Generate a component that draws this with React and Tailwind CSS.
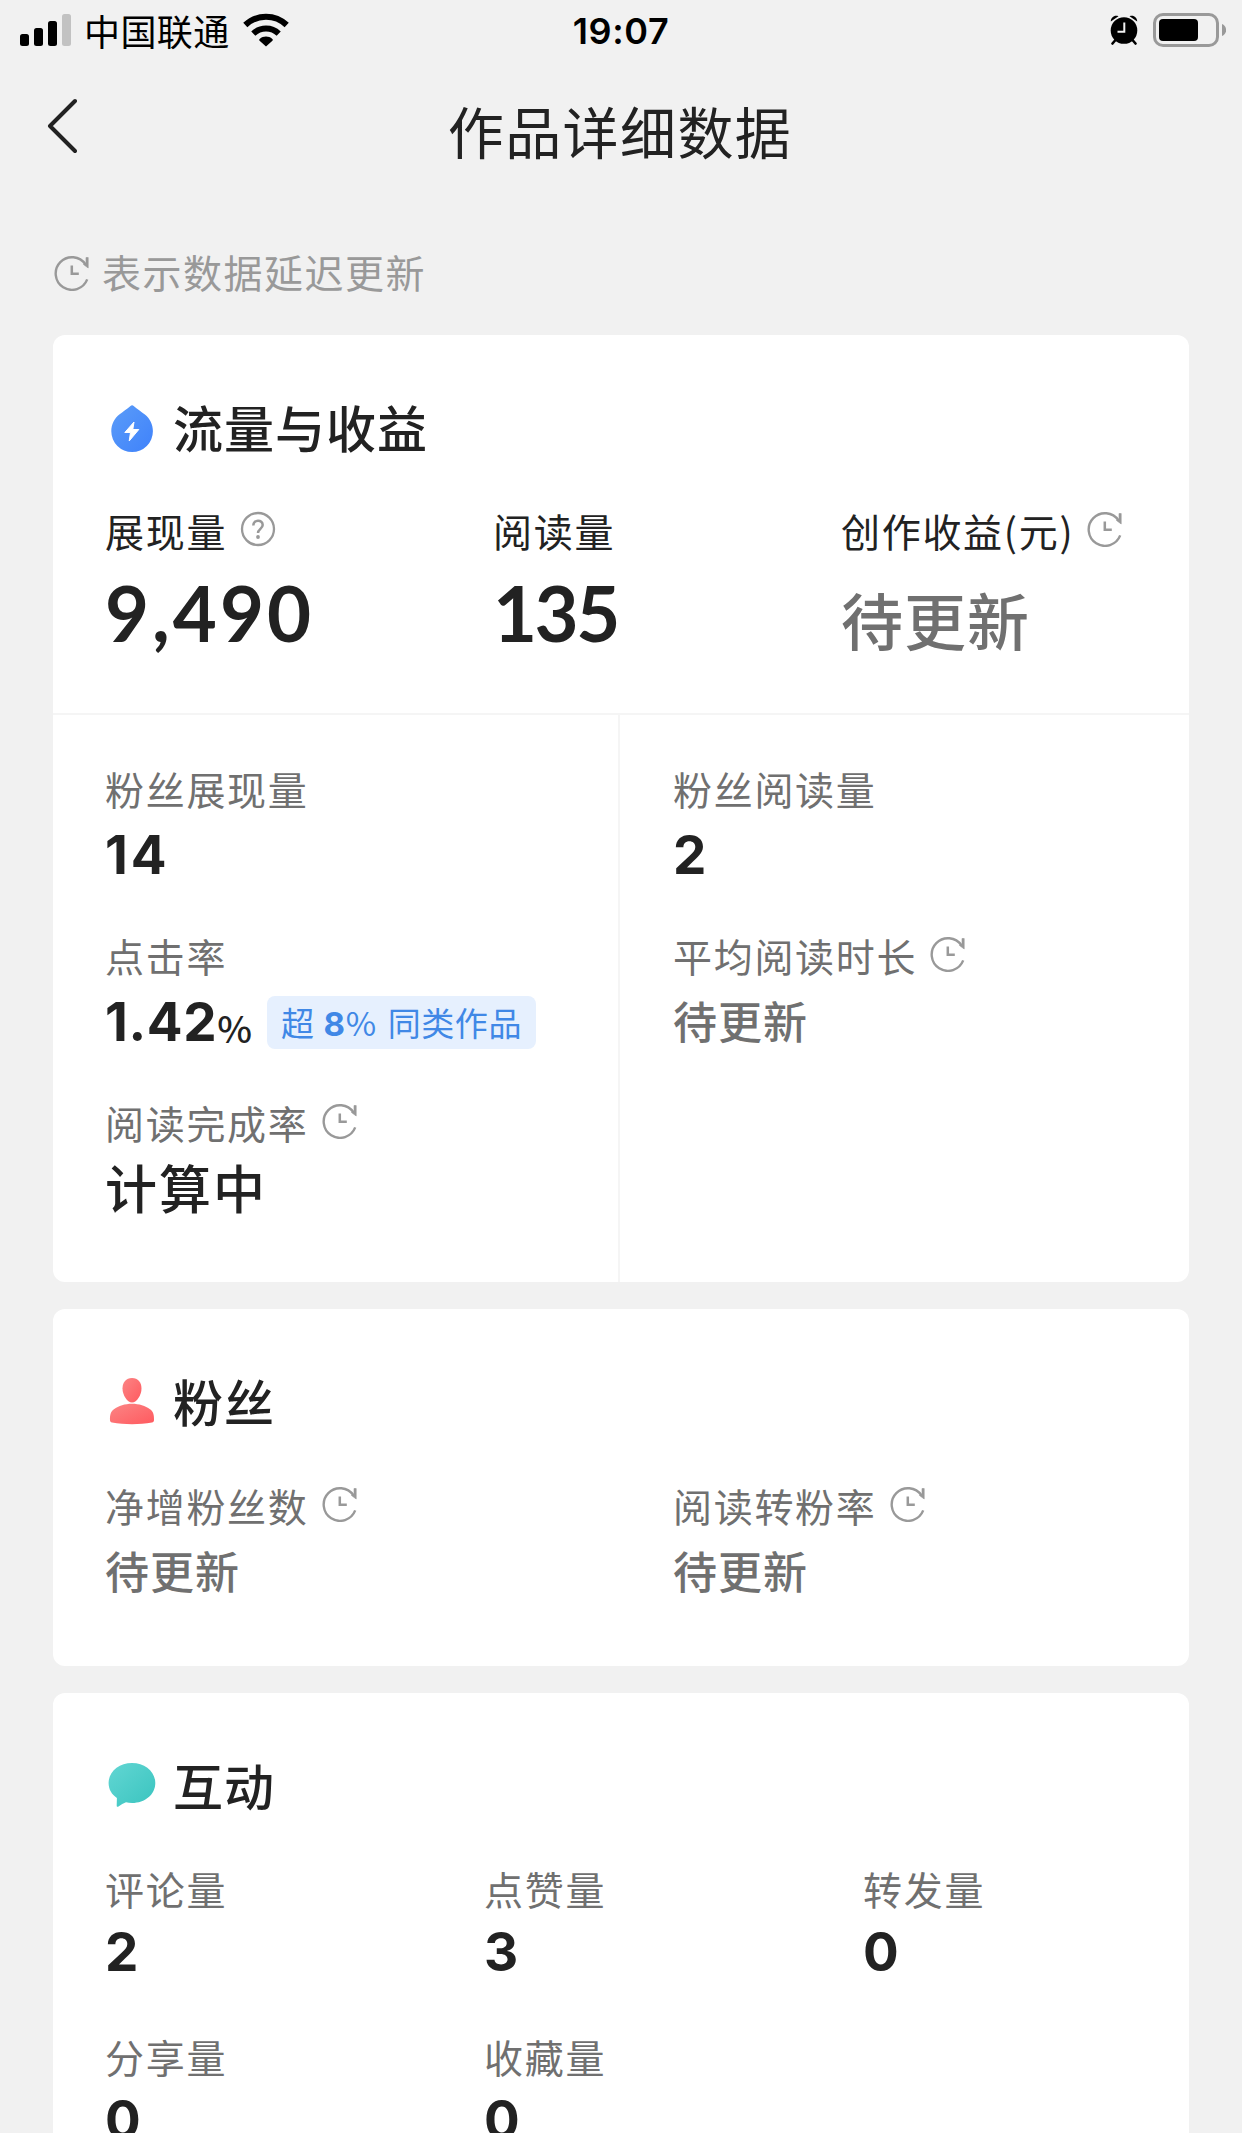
function ClockIcon() {
    return (
        <svg className="h-9 w-9 shrink-0" viewBox="0 0 36 36" fill="none" stroke="#999999" strokeWidth="2.4">
            <path d="M33.2 24.4A16.3 16.3 0 1 1 31.5 9.4" />
            <path d="M34.2 2.5v10.5l-4.800-3.600 2.600-1.600V2.5z" fill="#999999" strokeWidth="0.6" />
            <path d="M17.8 10.5v8.3h7" strokeWidth="2.5" />
        </svg>
    )
}

function HelpIcon() {
    return (
        <svg className="h-9 w-9 shrink-0" viewBox="0 0 36 36" fill="none" stroke="#999999" strokeWidth="2.3">
            <circle cx="18" cy="18" r="16" />
            <path d="M13.3 14.5c0-6.300 9.400-6.300 9.400-.5 0 3.700-4.700 4-4.700 8" strokeWidth="2.5" />
            <circle cx="18" cy="26" r="1.9" fill="#999999" stroke="none" />
        </svg>
    )
}

function DropIcon() {
    return (
        <svg className="h-[50px] w-12 shrink-0 overflow-visible" viewBox="0 0 48 50">
            <defs>
                <linearGradient id="drop" x1="0" y1="0" x2="1" y2="1">
                    <stop offset="0" stopColor="#5b9cf8" />
                    <stop offset="1" stopColor="#3f82fb" />
                </linearGradient>
            </defs>
            <path d="M22.5 4.900c1-.9 2.200-.9 3.200 0 3.500 3 7.500 5.600 11.200 8.700 4.900 4 8 9.900 8 16.700a20.800 20.800 0 0 1-41.600 0c0-6.800 3.100-12.700 8-16.700 3.700-3.100 7.700-5.700 11.200-8.700z" fill="url(#drop)" />
            <path d="M26 21l-9.200 10.500h5.700l-1.300 8.500 9.600-11.500h-6z" fill="white" stroke="white" strokeLinejoin="round" />
        </svg>
    )
}

function PersonIcon() {
    return (
        <svg className="h-[50px] w-12 shrink-0" viewBox="0 0 48 50">
            <defs>
                <linearGradient id="person" x1="0" y1="0" x2="1" y2="1">
                    <stop offset="0" stopColor="#fb8585" />
                    <stop offset="1" stopColor="#ff5a5f" />
                </linearGradient>
            </defs>
            <path d="M24 3c6 0 9.500 4.300 9.500 10.500S29 27.500 24 27.500s-9.500-7.800-9.500-14S18 3 24 3z" fill="url(#person)" />
            <path d="M24 28.800c7 0 13.500 2.200 18 5.400 3 2.200 4.200 5 4 11 0 1.300-.8 2-2 2.300-6.500 1.300-13 1.700-20 1.700s-13.500-.4-20-1.700c-1.200-.3-2-1-2-2.300-.2-6 1-8.800 4-11 4.500-3.200 11-5.400 18-5.400z" fill="url(#person)" />
        </svg>
    )
}

function BubbleIcon() {
    return (
        <svg className="h-[50px] w-12 shrink-0" viewBox="0 0 48 50">
            <defs>
                <linearGradient id="bubble" x1="0" y1="0" x2="1" y2="1">
                    <stop offset="0" stopColor="#62d6d3" />
                    <stop offset="1" stopColor="#3ac4bf" />
                </linearGradient>
            </defs>
            <path d="M24 4c13 0 23.300 8.500 23.300 20S37 44 24 44c-2.200 0-4.200-.2-6-.7-2.500 1-5 2.600-7.500 4.100-1.300.7-1.900.2-1.800-1.200l.2-7.200C3.800 35.500.6 30.500.6 24 .6 12.500 11 4 24 4z" fill="url(#bubble)" />
        </svg>
    )
}

function StatusBar() {
    return (
        <div className="flex h-[60px] items-center justify-between pl-5 pr-4 text-black">
            <div className="flex w-[500px] items-center">
                <svg className="h-8 w-[52px]" viewBox="0 0 52 32">
                    <rect x="0" y="20" width="9" height="12" rx="2.5" />
                    <rect x="14" y="14" width="9" height="18" rx="2.5" />
                    <rect x="28" y="7" width="9" height="25" rx="2.5" />
                    <rect x="42" y="0" width="9" height="32" rx="2.5" fill="#c2c2c2" />
                </svg>
                <span className="ml-3 text-[36px] leading-[60px] tracking-[0.4px]">中国联通</span>
                <svg className="ml-[13px] h-[34px] w-[46px]" viewBox="0 0 46 34">
                    <path d="M23 33.5l-6.400-5.800c-.7-.6-.6-1.300.1-1.800 3.500-3.200 9.100-3.200 12.600 0 .7.500.8 1.200.1 1.800z" />
                    <path d="M10.3 20.6a18.500 18.500 0 0 1 25.400 0" fill="none" stroke="black" strokeWidth="6" />
                    <path d="M2.3 12a30 30 0 0 1 41.400 0" fill="none" stroke="black" strokeWidth="6" />
                </svg>
            </div>
            <span className="pr-1 pt-0.5 font-['Inter'] text-[36px] font-semibold leading-[58px] tracking-[0.6px]">19:07</span>
            <div className="flex w-[500px] items-center justify-end">
                <svg className="h-[30px] w-7" viewBox="0 0 28 30">
                    <circle cx="14" cy="15.5" r="13.3" />
                    <path d="M.8 6.5C.8 2.5 4.5-.5 8.5 1.200zM27.200 6.500c0-4-3.700-7-7.700-5.300z" />
                    <path d="M5.500 25l-3 3.500M22.500 25l3 3.500" stroke="black" strokeWidth="2.6" strokeLinecap="round" />
                    <path d="M14.3 7.5v9.200H7.500" fill="none" stroke="#f1f1f1" strokeWidth="2" />
                </svg>
                <svg className="ml-3.5 h-[34px] w-[74px]" viewBox="0 0 74 34">
                    <rect x="2.5" y="1.5" width="63" height="31" rx="8.5" fill="none" stroke="#999999" strokeWidth="3" />
                    <rect x="7" y="6" width="39" height="22" rx="4" />
                    <path d="M70 11c5.500 2 5.500 10 0 12z" fill="#999999" />
                </svg>
            </div>
        </div>
    )
}

function SectionTitle({ icon, children }) {
    return (
        <div className="flex h-[50px] items-center">
            <div className="ml-[3px]">{icon}</div>
            <h2 className="ml-[17px] text-[50px] font-medium leading-[50px] tracking-[1px]">{children}</h2>
        </div>
    )
}

function Label({ icon, dark, children }) {
    return (
        <div className={`flex h-11 items-center whitespace-nowrap text-[39px] leading-[44px] tracking-[1.7px] ${dark ? 'text-[#222222]' : 'text-[#707070]'}`}>
            <span className="mb-px">{children}</span>
            {icon && <span className="mb-[3px] ml-[13px]">{icon}</span>}
        </div>
    )
}

function Pending() {
    return <span className="pt-0.5 text-[44px] font-medium leading-[55px] tracking-[1px] text-[#707070]">待更新</span>
}

function Stat({ label, clock, tight, children }) {
    return (
        <div>
            <Label icon={clock && <ClockIcon />}>{label}</Label>
            <div className={`flex h-[60px] items-center whitespace-nowrap font-['Inter','Noto_Sans_CJK_SC',sans-serif] text-[53px] font-bold leading-[60px] ${tight ? 'mt-3' : 'mt-[15px]'}`}>
                {children}
            </div>
        </div>
    )
}

export default function App() {
    const interactions = [
        { label: '评论量', value: 2 },
        { label: '点赞量', value: 3 },
        { label: '转发量', value: 0 },
        { label: '分享量', value: 0 },
        { label: '收藏量', value: 0 },
    ]

    return (
        <div className="h-[2133px] w-[1242px] overflow-hidden bg-[#f1f1f1] font-['Noto_Sans_CJK_SC',sans-serif] text-[#222222]">
            <StatusBar />

            {/* Nav bar */}
            <header className="grid h-[140px] grid-cols-[1fr_auto_1fr] pl-[45px] pr-[47px]">
                <svg className="mt-[38px] h-14 w-8" viewBox="0 0 32 56" fill="none" stroke="#222222" strokeWidth="4" strokeLinecap="round" strokeLinejoin="round">
                    <path d="M30 3L5 28l25 25" />
                </svg>
                <h1 className="mt-[30px] h-20 text-[56px] leading-[80px] tracking-[1.4px]">作品详细数据</h1>
            </header>

            {/* Delayed data hint */}
            <div className="flex h-[135px] items-center pl-[54px] pt-[10px] text-[39px] leading-[44px] tracking-[1.5px] text-[#999999]">
                <ClockIcon />
                <span className="mb-1 ml-3">表示数据延迟更新</span>
            </div>

            <main className="mx-[53px] flex flex-col">
                <section className="flex h-[947px] flex-col rounded-xl bg-white">
                    <div className="h-[380px] border-b-2 border-[#f5f5f5] pl-[52px] pt-[66px]">
                        <SectionTitle icon={<DropIcon />}>流量与收益</SectionTitle>
                        <div className="mt-[57px] grid grid-cols-[388px_347px_1fr]">
                            <div>
                                <Label dark icon={<HelpIcon />}>展现量</Label>
                                <div className="mt-[21px] font-['Lato'] text-[76px] font-bold leading-[80px] tracking-[3px]">9,490</div>
                            </div>
                            <div>
                                <Label dark>阅读量</Label>
                                <div className="mt-[21px] font-['Lato'] text-[76px] font-bold leading-[80px] tracking-[-2.5px]">135</div>
                            </div>
                            <div className="pl-px">
                                <Label dark icon={<ClockIcon />}>创作收益(元)</Label>
                                <div className="mt-5 pt-[13px] text-[62px] font-medium leading-[68px] tracking-[1px] text-[#707070]">待更新</div>
                            </div>
                        </div>
                    </div>

                    <div className="grid flex-1 grid-cols-[567px_1fr]">
                        <div className="flex flex-col gap-12 border-r-2 border-[#f5f5f5] pl-[52px] pt-[51px]">
                            <Stat label="粉丝展现量"><span className="tracking-[3px]">14</span></Stat>
                            <Stat label="点击率">
                                <span className="tracking-[0.6px]">1.42</span>
                                <span className="mt-2.5 font-['Noto_Sans_CJK_SC'] text-[37px] font-medium">%</span>
                                <span className="ml-[15px] flex h-[53px] items-center rounded-lg bg-[#e6f0fe] px-3.5 font-['Noto_Sans_CJK_SC'] text-[33px] font-normal leading-[48px] tracking-[0.6px] text-[#4088e6]">
                                    超
                                    <b className="ml-[9px] mt-[3px] font-['Inter']">8</b>
                                    <span className="mr-[11px]">%</span>
                                    同类作品
                                </span>
                            </Stat>
                            <Stat label="阅读完成率" clock>
                                <span className="pt-[3px] text-[52px] font-medium leading-[54px] tracking-[2px]">计算中</span>
                            </Stat>
                        </div>
                        <div className="flex flex-col gap-12 pl-[53px] pt-[51px]">
                            <Stat label="粉丝阅读量">2</Stat>
                            <Stat label="平均阅读时长" clock><Pending /></Stat>
                        </div>
                    </div>
                </section>

                <section className="mt-[27px] h-[357px] rounded-xl bg-white pl-[52px] pt-[66px]">
                    <SectionTitle icon={<PersonIcon />}>粉丝</SectionTitle>
                    <div className="mt-[58px] grid grid-cols-[568px_1fr]">
                        <Stat label="净增粉丝数" clock><Pending /></Stat>
                        <Stat label="阅读转粉率" clock><Pending /></Stat>
                    </div>
                </section>

                <section className="mt-[27px] h-[500px] rounded-t-xl bg-white pl-[52px] pt-[66px]">
                    <SectionTitle icon={<BubbleIcon />}>互动</SectionTitle>
                    <div className="mt-[57px] grid grid-cols-[379px_379px_1fr] gap-y-[52px]">
                        {interactions.map((item) => (
                            <Stat key={item.label} label={item.label} tight>{item.value}</Stat>
                        ))}
                    </div>
                </section>
            </main>
        </div>
    )
}
